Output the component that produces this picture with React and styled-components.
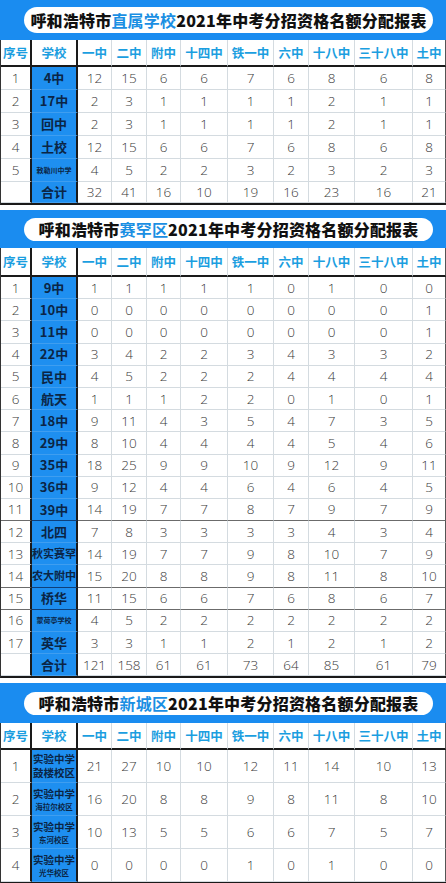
import React from "react";
import styled, { createGlobalStyle } from "styled-components";

const Global = createGlobalStyle`
  html, body {
    margin: 0;
    padding: 0;
    background: #ffffff;
  }
  * { box-sizing: border-box; }
`;

const Page = styled.div`
  width: 446px;
  display: flex;
  flex-direction: column;
  gap: 5px;
  font-family: "Noto Sans CJK SC", "Noto Sans", sans-serif;
`;

const Sheet = styled.section`
  display: flex;
  flex-direction: column;
`;

const Banner = styled.div`
  height: ${p => p.$h}px;
  background: #1a8cf0;
  display: flex;
  align-items: center;
  padding: 0 13px 0 24px;
`;

const Pill = styled.h2`
  flex: 1;
  height: ${p => p.$h}px;
  margin: 0;
  background: #fff;
  border-radius: 14px;
  display: flex;
  align-items: center;
  justify-content: center;
  font-family: "Noto Sans CJK SC", sans-serif;
  font-size: 16px;
  font-weight: 900;
  color: #111;
  letter-spacing: 0.2px;
`;

const Hl = styled.span`
  color: #1a8fe3;
  font-weight: 700;
`;

const Grid = styled.div`
  display: grid;
  grid-template-columns: 31px 46px 34px 35px 34px 47px 46px 35px 46px 58px 33px;
  border-left: 1px solid #333;
  border-bottom: 2px solid #1a1a1a;
`;

const Cell = styled.div`
  height: ${p => p.$h}px;
  display: flex;
  align-items: center;
  justify-content: center;
  border-right: ${p => (p.$dark ? "2px solid #1a1a1a" : p.$last ? "1px solid #555" : "1px solid #d4dbe0")};
  border-bottom: 1px solid ${p => (p.$strong ? "#6b6b6b" : "#d4dbe0")};
  font-family: "Open Sans", "Liberation Sans", sans-serif;
  font-weight: 300;
  font-size: 13.5px;
  color: #3a3a3a;
  background: #fff;
  white-space: nowrap;
`;

const HeadCell = styled(Cell)`
  border-bottom: 2px solid #1a1a1a;
  font-family: "Noto Sans CJK SC", sans-serif;
  font-weight: 700;
  font-size: 12.5px;
  color: #1b9ee0;
`;

const School = styled(Cell)`
  background: #1e8ff0;
  border-bottom-color: ${p => (p.$strong ? "#0d3f7a" : "#3f9ef0")};
  flex-direction: column;
  gap: 1px;
  font-family: "Noto Sans CJK SC", sans-serif;
  font-weight: 700;
  font-size: ${p => p.$size || 13}px;
  line-height: 1.2;
  color: #0b2545;
  overflow: hidden;
`;

const Name = styled.span`
  display: block;
  line-height: 1.2;
`;

const Sub = styled.span`
  display: block;
  font-size: ${p => p.$size || 8}px;
  font-weight: 700;
  line-height: 1.2;
  color: #0b2545;
`;

const heads = ["一中", "二中", "附中", "十四中", "铁一中", "六中", "十八中", "三十八中", "土中"];

const direct = [
  ["1", "4中", [12, 15, 6, 6, 7, 6, 8, 6, 8]],
  ["2", "17中", [2, 3, 1, 1, 1, 1, 2, 1, 1]],
  ["3", "回中", [2, 3, 1, 1, 1, 1, 2, 1, 1]],
  ["4", "土校", [12, 15, 6, 6, 7, 6, 8, 6, 8]],
  ["5", { name: "敕勒川中学", size: 7 }, [4, 5, 2, 2, 3, 2, 3, 2, 3]],
  ["", "合计", [32, 41, 16, 10, 19, 16, 23, 16, 21], 21],
];

const saihan = [
  ["1", "9中", [1, 1, 1, 1, 1, 0, 1, 0, 0]],
  ["2", "10中", [0, 0, 0, 0, 0, 0, 0, 0, 1]],
  ["3", "11中", [0, 0, 0, 0, 0, 0, 0, 0, 1]],
  ["4", "22中", [3, 4, 2, 2, 3, 4, 3, 3, 2]],
  ["5", "民中", [4, 5, 2, 2, 2, 4, 4, 4, 4]],
  ["6", "航天", [1, 1, 1, 2, 2, 0, 1, 0, 1]],
  ["7", "18中", [9, 11, 4, 3, 5, 4, 7, 3, 5]],
  ["8", "29中", [8, 10, 4, 4, 4, 4, 5, 4, 6]],
  ["9", "35中", [18, 25, 9, 9, 10, 9, 12, 9, 11]],
  ["10", "36中", [9, 12, 4, 4, 6, 4, 6, 4, 5]],
  ["11", "39中", [14, 19, 7, 7, 8, 7, 9, 7, 9], null, true],
  ["12", "北四", [7, 8, 3, 3, 3, 3, 4, 3, 4]],
  ["13", { name: "秋实赛罕", size: 11 }, [14, 19, 7, 7, 9, 8, 10, 7, 9]],
  ["14", { name: "农大附中", size: 11 }, [15, 20, 8, 8, 9, 8, 11, 8, 10], null, true],
  ["15", "桥华", [11, 15, 6, 6, 7, 6, 8, 6, 7], null, true],
  ["16", { name: "蒙荷亭学校", size: 7 }, [4, 5, 2, 2, 2, 2, 2, 2, 2]],
  ["17", "英华", [3, 3, 1, 1, 2, 1, 2, 1, 2]],
  ["", "合计", [121, 158, 61, 61, 73, 64, 85, 61, 79]],
];

const xincheng = [
  ["1", { name: "实验中学", size: 10.5, sub: "鼓楼校区", subSize: 10.5 }, [21, 27, 10, 10, 12, 11, 14, 10, 13]],
  ["2", { name: "实验中学", size: 10.5, sub: "海拉尔校区", subSize: 7.5 }, [16, 20, 8, 8, 9, 8, 11, 8, 10]],
  ["3", { name: "实验中学", size: 10.5, sub: "东河校区", subSize: 7.5 }, [10, 13, 5, 5, 6, 6, 7, 5, 7]],
  ["4", { name: "实验中学", size: 10.5, sub: "光华校区", subSize: 7.5 }, [0, 0, 0, 0, 1, 0, 1, 0, 0]],
];

function Table({ hl, bandH, pillH, headH, rowH, rows }) {
  return (
    <Sheet>
      <Banner $h={bandH}>
        <Pill $h={pillH}>
          呼和浩特市<Hl>{hl}</Hl>2021年中考分招资格名额分配报表
        </Pill>
      </Banner>
      <Grid>
        <HeadCell $h={headH} $dark>序号</HeadCell>
        <HeadCell $h={headH} $dark>学校</HeadCell>
        {heads.map((h, i) => (
          <HeadCell key={h} $h={headH} $last={i === heads.length - 1}>
            {h}
          </HeadCell>
        ))}
        {rows.map(([no, school, vals, h, strong], r) => {
          const height = h || rowH;
          const s = typeof school === "string" ? { name: school } : school;
          return (
            <React.Fragment key={r}>
              <Cell $h={height} $dark $strong={strong}>{no}</Cell>
              <School $h={height} $dark $strong={strong} $size={s.size}>
                {s.sub ? <Name>{s.name}</Name> : s.name}
                {s.sub && <Sub $size={s.subSize}>{s.sub}</Sub>}
              </School>
              {vals.map((v, i) => (
                <Cell key={i} $h={height} $strong={strong} $last={i === vals.length - 1}>
                  {v}
                </Cell>
              ))}
            </React.Fragment>
          );
        })}
      </Grid>
    </Sheet>
  );
}

export default function App() {
  return (
    <Page>
      <Global />
      <Table hl="直属学校" bandH={40} pillH={26} headH={27} rowH={23} rows={direct} />
      <Table hl="赛罕区" bandH={38} pillH={23} headH={29} rowH={22.2} rows={saihan} />
      <Table hl="新城区" bandH={40} pillH={23} headH={27} rowH={33} rows={xincheng} />
    </Page>
  );
}
